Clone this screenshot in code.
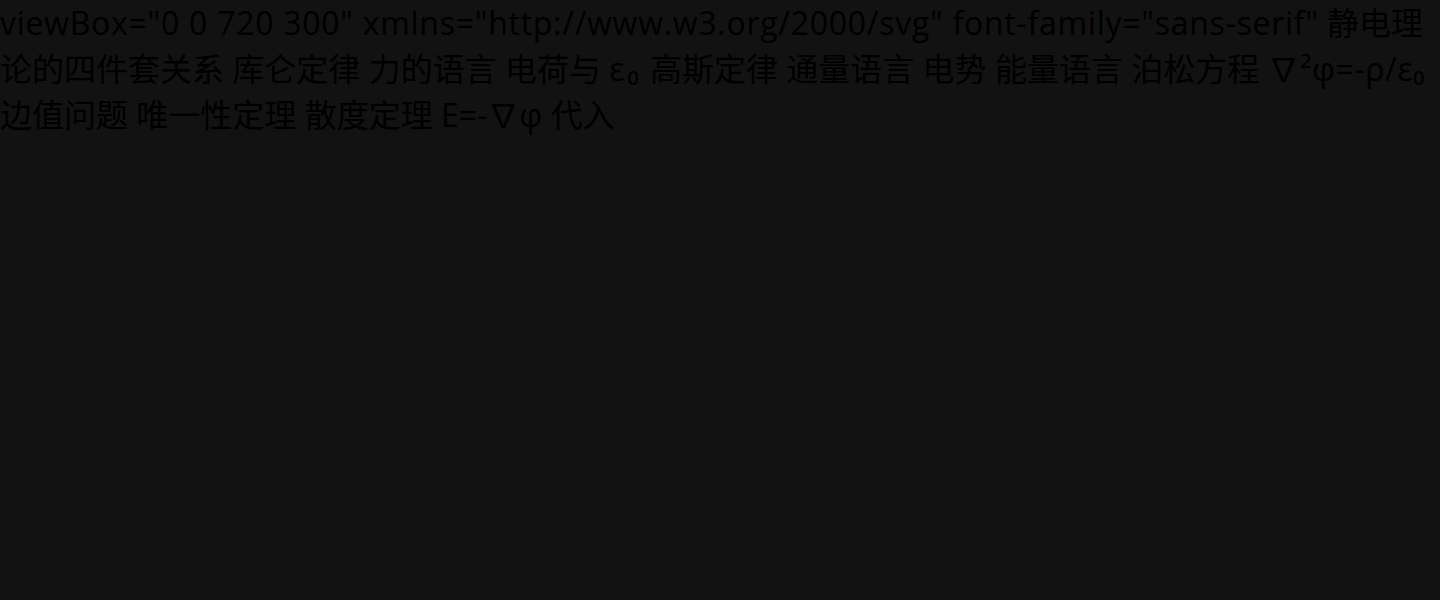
export default function App() {
  return (
    <div className="min-h-screen w-full bg-[#121212]">
      <p className="whitespace-nowrap text-[32px] leading-[46px] text-black font-['Open_Sans','Noto_Sans_CJK_SC',sans-serif]">
        <span className="tracking-[0.72px]">viewBox="0 0 720 300" xmlns="http://www.w3.org/2000/svg" font-family="sans-serif"</span> 静电理
        <br />
        论的四件套关系 库仑定律 力的语言 电荷与 <span className="tracking-[3px]">ε₀</span> 高斯定律 通量语言 电势 能量语言 泊松方程 <span className="tracking-[0.6px]">∇²φ=-ρ/ε₀</span>
        <br />
        边值问题 唯一性定理 散度定理 E=-∇φ 代入
      </p>
    </div>
  );
}
